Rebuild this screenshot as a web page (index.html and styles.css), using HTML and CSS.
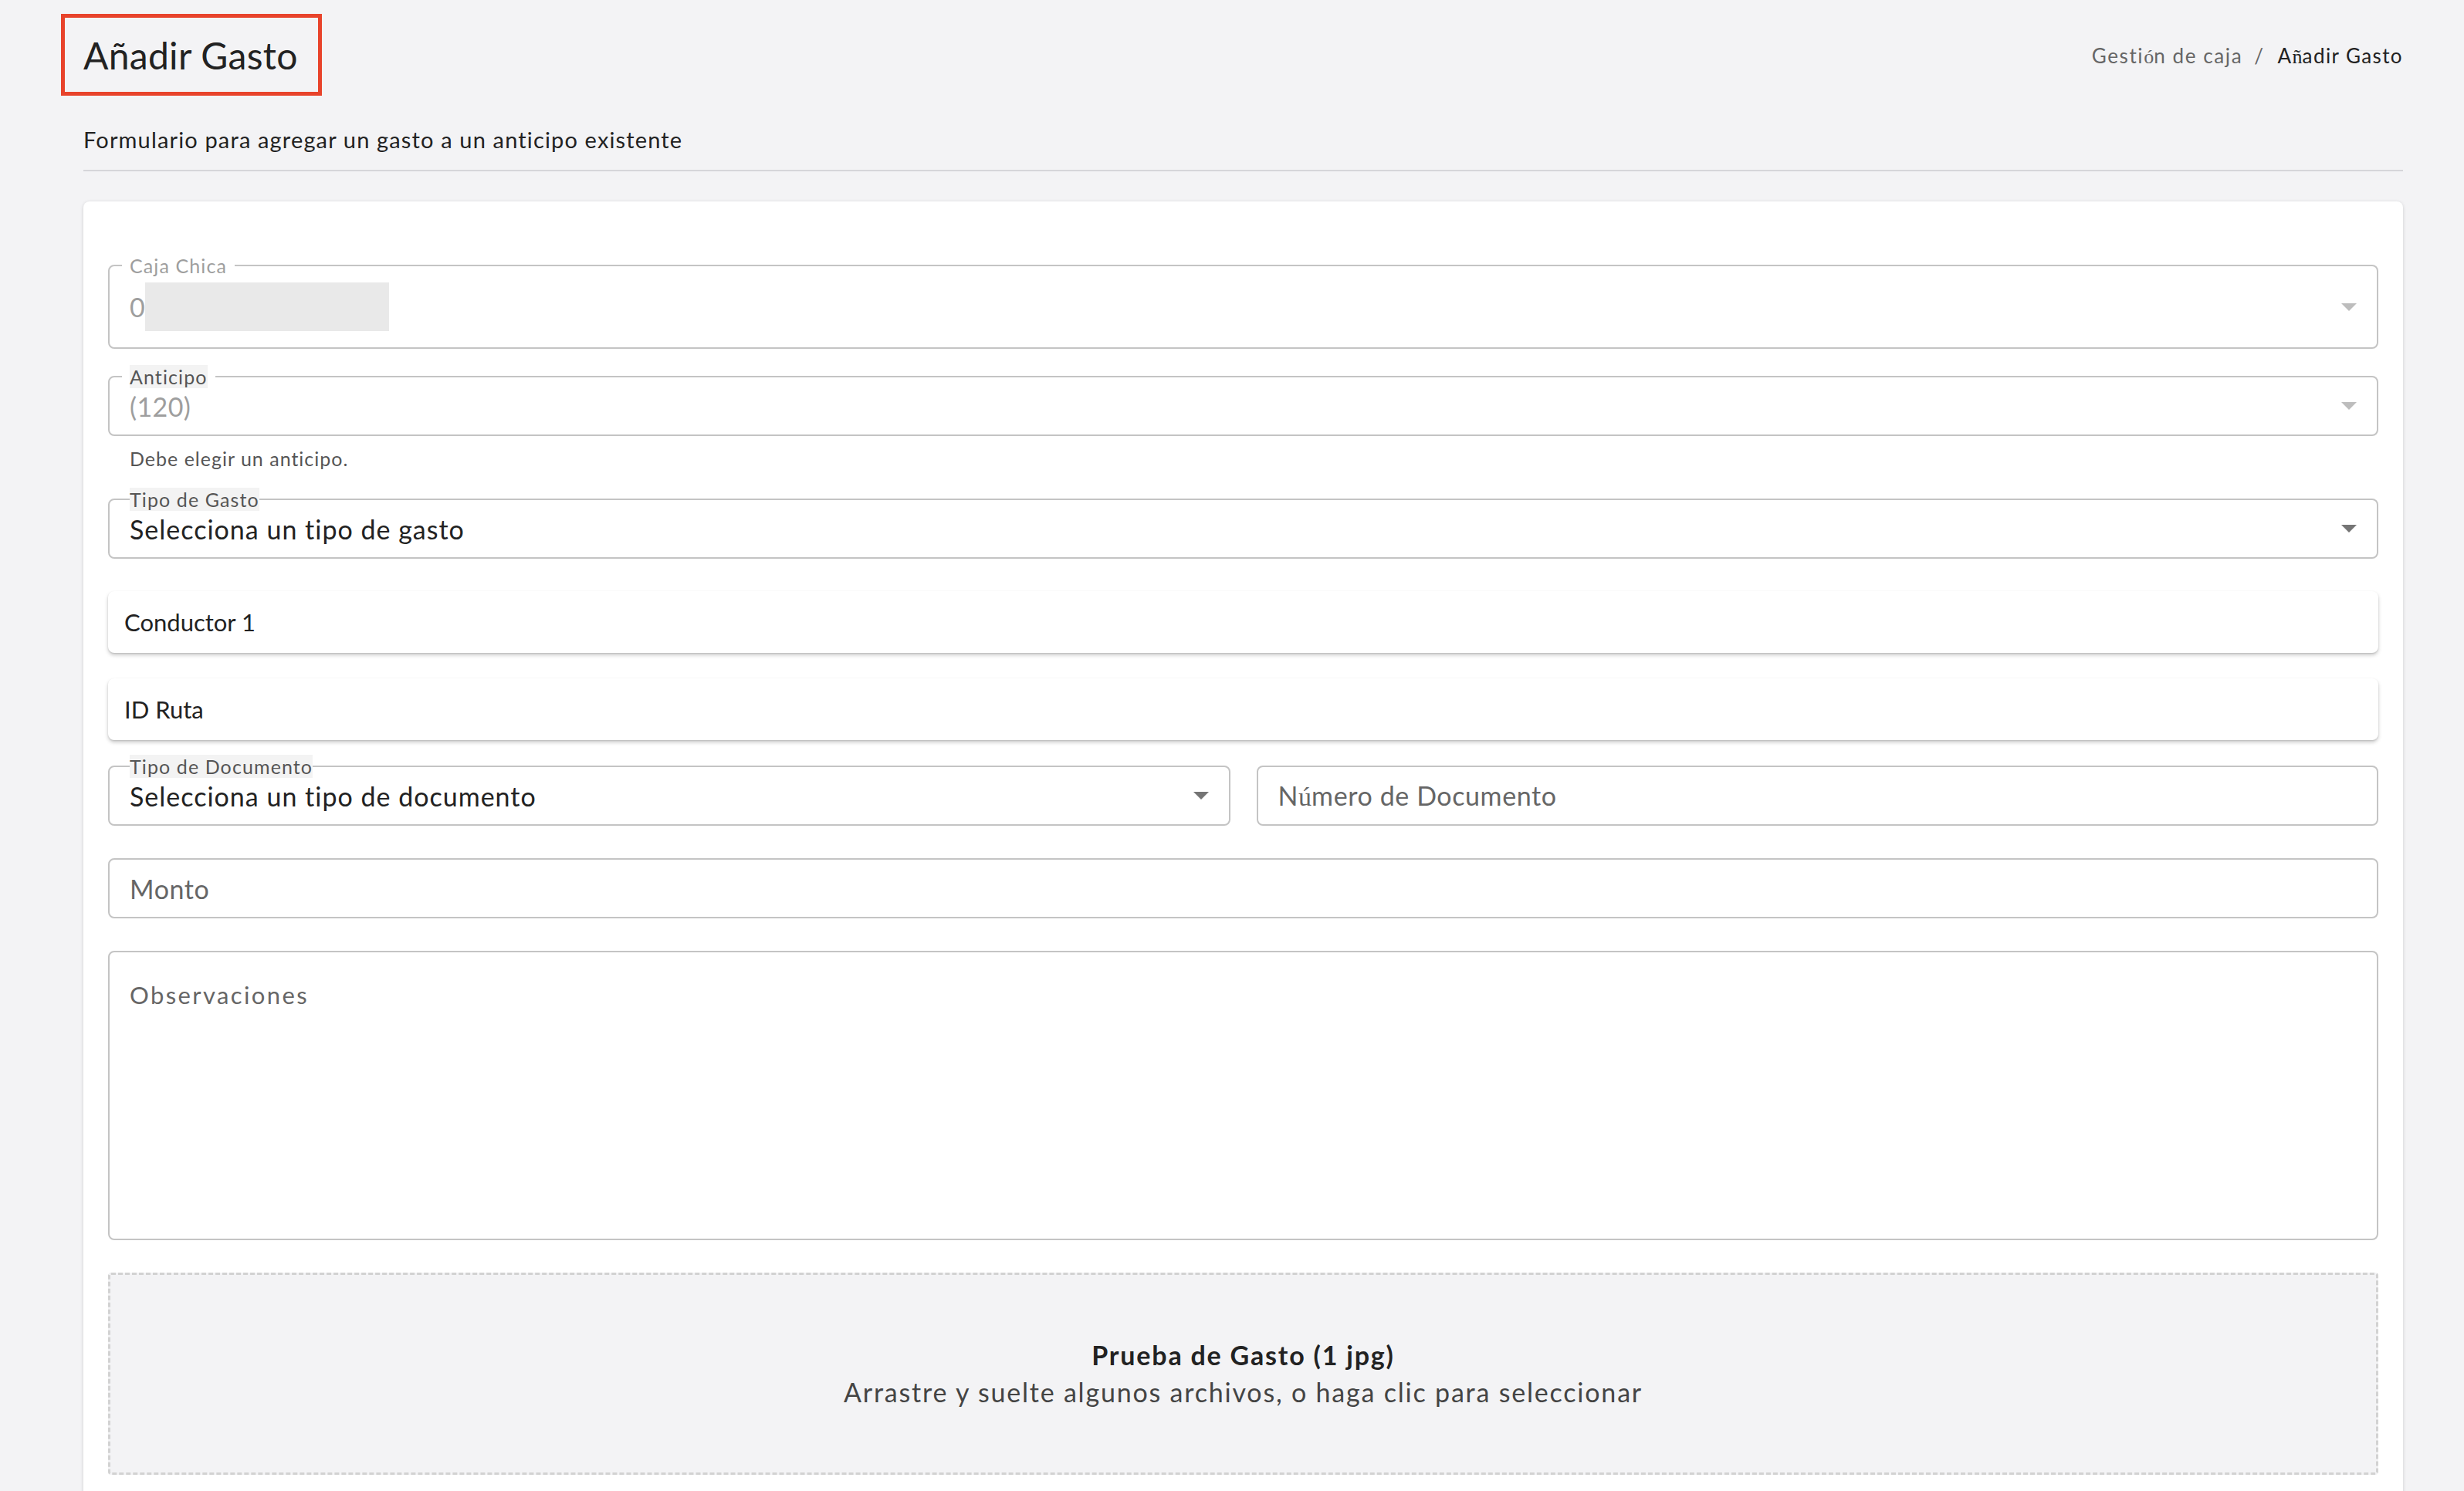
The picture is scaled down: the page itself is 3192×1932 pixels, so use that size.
FILE: index.html
```html
<!DOCTYPE html>
<html lang="es">

<head>
	<meta charset="UTF-8">
	<meta name="viewport" content="width=device-width, initial-scale=1.0">
	<title>Añadir Gasto</title>
	<link rel="stylesheet" href="styles.css">
</head>

<body>
	<div class="page">
		<div class="page-head">
			<h1 class="page-title">Añadir Gasto</h1>
			<nav class="crumbs">
				<span class="crumb">Gesti<span class="alt-glyph">ó</span>n de caja</span>
				<span class="crumb-sep">/</span>
				<span class="crumb current">A<span class="alt-glyph">ñ</span>adir Gasto</span>
			</nav>
		</div>
		<p class="page-desc">Formulario para agregar un gasto a un anticipo existente</p>

		<div class="card">
			<form class="expense-form">
				<!-- caja chica (disabled, still loading) -->
				<div class="field field-tall is-disabled">
					<span class="field-label label-gap">Caja Chica</span>
					<span class="field-value">0</span>
					<span class="skeleton"></span>
					<span class="caret"></span>
				</div>

				<div class="field is-disabled row-second">
					<span class="field-label label-gap"><span class="label-hl">Anticipo</span></span>
					<span class="field-value">(120)</span>
					<span class="caret"></span>
				</div>
				<p class="helper">Debe elegir un anticipo.</p>

				<div class="field row-after-helper">
					<span class="field-label"><span class="label-hl">Tipo de Gasto</span></span>
					<span class="field-value">Selecciona un tipo de gasto</span>
					<span class="caret"></span>
				</div>

				<div class="paper-input row">Conductor 1</div>
				<div class="paper-input row-tight">ID Ruta</div>

				<div class="field-pair row-tight">
					<div class="field">
						<span class="field-label"><span class="label-hl">Tipo de Documento</span></span>
						<span class="field-value">Selecciona un tipo de documento</span>
						<span class="caret"></span>
					</div>
					<div class="field">
						<span class="field-value placeholder">N<span class="alt-glyph">ú</span>mero de Documento</span>
					</div>
				</div>

				<div class="field row">
					<span class="field-value placeholder">Monto</span>
				</div>

				<div class="field field-area row">
					<span class="area-placeholder">Observaciones</span>
				</div>

				<div class="dropzone row">
					<strong class="drop-title">Prueba de Gasto (1 jpg)</strong>
					<span class="drop-hint">Arrastre y suelte algunos archivos, o haga clic para seleccionar</span>
				</div>
			</form>
		</div>
	</div>
</body>

</html>
```

FILE: styles.css
```css
body {
	margin: 0;
	background-color: #f3f3f5;
	font-family: "Lato", "Noto Sans", sans-serif;
	color: #222;
}

.page {
	padding: 18px 79px 0 108px;
}

.page-head {
	display: flex;
	justify-content: space-between;
	align-items: center;
}

.page-title {
	margin: 0 0 0 -29px;
	height: 96px;
	width: 328px;
	box-sizing: content-box;
	padding: 0;
	display: flex;
	align-items: center;
	border: 5px solid #e8432b; /* highlight box */
	font-size: 48px;
	font-weight: 400;
	letter-spacing: 0.3px;
	text-indent: 24px;
}

.crumbs {
	display: flex;
	align-items: center;
	font-size: 26px;
	letter-spacing: 1.6px;
	color: #666;
	margin-top: 2px;
}

.crumb.current {
	color: #222;
	letter-spacing: 1.4px;
}

.crumb-sep {
	margin: 0 17px 0 15px;
	color: #666;
}

.alt-glyph {
	font-family: "Liberation Serif", serif;
	letter-spacing: 0;
}

.page-desc {
	margin: 39px 0 0;
	padding-bottom: 21px;
	border-bottom: 2px solid #d6d6d9;
	font-size: 29px;
	letter-spacing: 1.15px;
	line-height: 36px;
}

.card {
	margin-top: 39px;
	background-color: #fff;
	border-radius: 8px;
	box-shadow: 0 1px 4px rgba(0, 0, 0, 0.16);
	padding: 82px 32px 60px;
}

.expense-form {
	display: flex;
	flex-direction: column;
}

.row {
	margin-top: 42px;
}

.row-second {
	margin-top: 35px;
}

.row-tight {
	margin-top: 33px;
}

.row-after-helper {
	margin-top: 40px;
}

/* outlined select / input */
.field {
	position: relative;
	display: flex;
	align-items: center;
	height: 78px;
	box-sizing: border-box;
	border: 2px solid #c4c4c4;
	border-radius: 8px;
	padding-left: 26px;
	background-color: #fff;
}

.field-tall {
	height: 109px;
}

.field-label {
	position: absolute;
	top: -13px;
	left: 26px;
	line-height: 24px;
	font-size: 25px;
	letter-spacing: 1.1px;
	color: #555;
	background-color: #fff;
}

.label-gap {
	left: 16px;
	padding: 0 10px;
}

.label-hl {
	background-color: #f3f3f3;
}

.is-disabled .field-label {
	color: #9e9e9e;
}

.is-disabled .label-hl {
	color: #555;
}

.field-value {
	font-size: 34px;
	letter-spacing: 1px;
	color: #222;
}

.is-disabled .field-value {
	color: #9e9e9e;
	letter-spacing: 0.4px;
}

.placeholder {
	letter-spacing: 0.6px;
	color: #666;
}

.skeleton {
	width: 316px;
	height: 63px;
	background-color: #e9e9e9;
}

.caret {
	margin-left: auto;
	margin-right: 26px;
	width: 0;
	height: 0;
	border-left: 10px solid transparent;
	border-right: 10px solid transparent;
	border-top: 10px solid #757575;
}

.is-disabled .caret {
	border-top-color: #bdbdbd;
}

.helper {
	margin: 17px 0 0 28px;
	font-size: 25px;
	letter-spacing: 1px;
	line-height: 24px;
	color: #555;
}

/* elevated text inputs */
.paper-input {
	display: flex;
	align-items: center;
	height: 80px;
	padding-left: 21px;
	border-radius: 8px;
	background-color: #fff;
	box-shadow: 0 3px 5px rgba(0, 0, 0, 0.2), 0 1px 2px rgba(0, 0, 0, 0.12);
	font-size: 31px;
	color: #222;
}

.field-pair {
	display: grid;
	grid-template-columns: 1fr 1fr;
	gap: 34px;
}

.field-area {
	height: 375px;
	align-items: flex-start;
	padding-top: 36px;
}

.area-placeholder {
	font-size: 31px;
	letter-spacing: 2.4px;
	color: #666;
}

.dropzone {
	display: flex;
	flex-direction: column;
	align-items: center;
	justify-content: center;
	gap: 8px;
	height: 262px;
	box-sizing: border-box;
	border: 3px dashed #d2d2d2;
	border-radius: 4px;
	background-color: #f3f3f5;
	font-size: 34px;
	line-height: 40px;
	letter-spacing: 1.8px;
}

.drop-title {
	font-weight: 700;
	color: #222;
}

.drop-hint {
	color: #444;
}
```
